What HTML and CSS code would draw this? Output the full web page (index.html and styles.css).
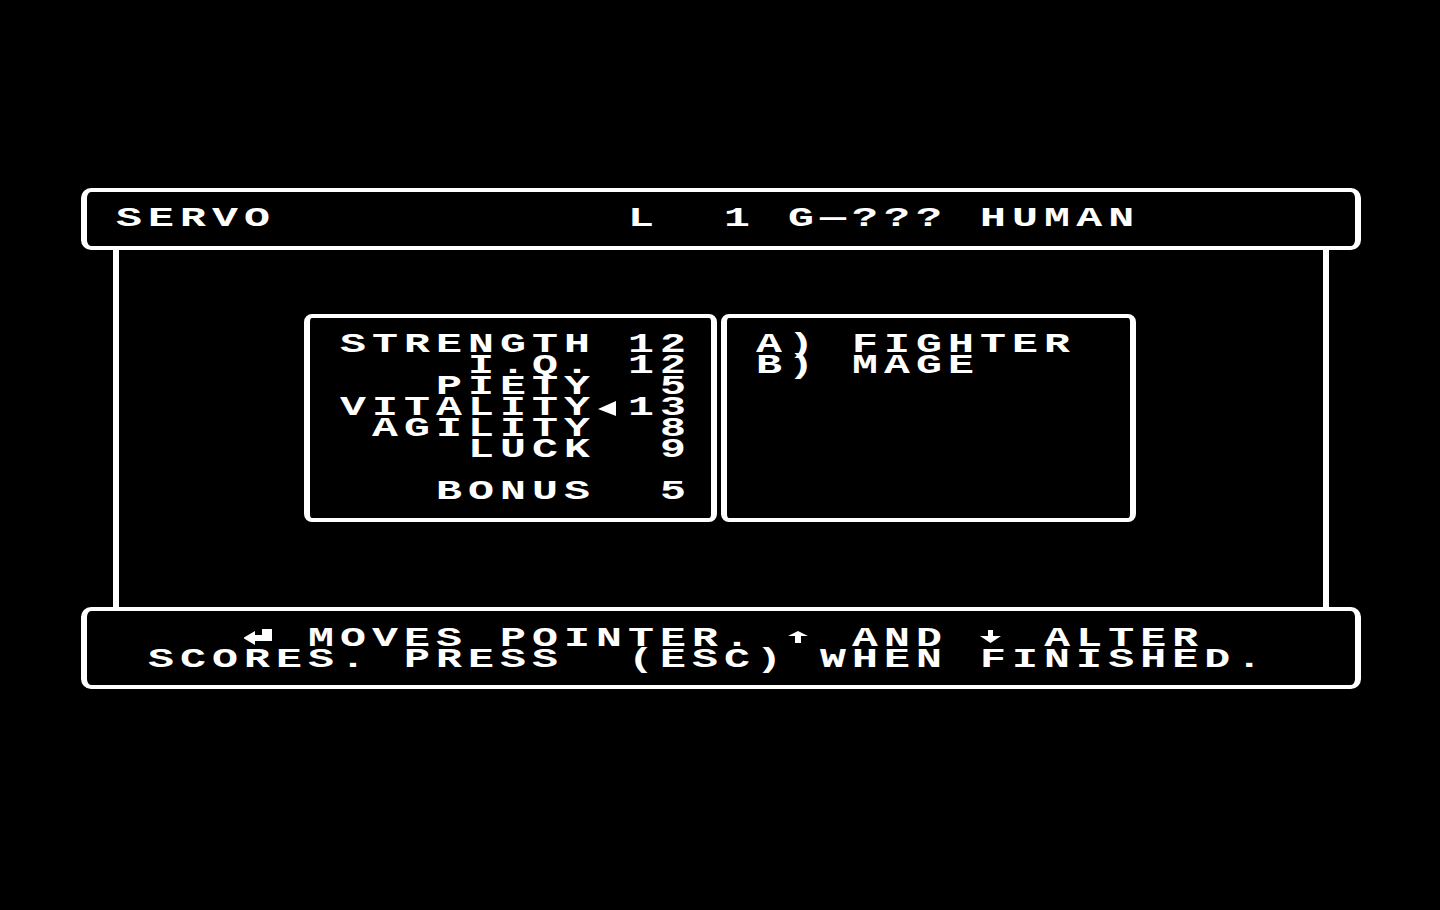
FILE: index.html
```html
<!DOCTYPE html>
<html>
<head>
<meta charset="utf-8">
<title>SERVO - 能力値</title>
<link rel="stylesheet" href="styles.css">
</head>

<body>
    <div class="screen">
        <!-- 名前・レベル・種族 -->
        <div class="bar title-bar">
            <pre class="text">SERVO           L  1 G—??? HUMAN</pre>
        </div>

        <div class="frame">
            <!-- 能力値 -->
            <div class="panel stats">
<pre class="text">STRENGTH 12
    I.Q. 12
   PIETY  5
VITALITY<svg class="glyph" viewBox="0 0 32 21" preserveAspectRatio="none"><polygon points="2,11 20,3 20,18"/></svg>13
 AGILITY  8
    LUCK  9

   BONUS  5</pre>
            </div>
            <!-- 職業 -->
            <div class="panel classes">
<pre class="text">A) FIGHTER
B) MAGE</pre>
            </div>
        </div>

        <!-- 操作説明 -->
        <div class="bar help-bar">
<pre class="text">   <svg class="glyph" viewBox="0 0 32 21" preserveAspectRatio="none"><polygon points="-1,9 11,2 11,6 18,6 18,0 28,0 28,12 11,12 11,16"/></svg> MOVES POINTER. <svg class="glyph" viewBox="0 0 32 21" preserveAspectRatio="none"><polygon points="10,2 20,7 13,7 13,14 7,14 7,7 0,7"/></svg> AND <svg class="glyph" viewBox="0 0 32 21" preserveAspectRatio="none"><polygon points="8,1 13,1 13,7 21,7 10.5,14 0,7 8,7"/></svg> ALTER
SCORES. PRESS  (ESC) WHEN FINISHED.</pre>
        </div>
    </div>
</body>

</html>
```

FILE: styles.css
```css
* { margin: 0; padding: 0; box-sizing: border-box; }
body { background-color: #000; color: #fff; font-family: "Liberation Mono", "DejaVu Sans Mono", monospace; font-weight: bold; overflow: hidden; }

/* 40桁 x 32px のマス目に合わせる */
.screen { width: 1280px; margin: 188px 0 0 81px; }
.text { width: max-content; white-space: pre; font-family: inherit; font-size: 27px; line-height: 21px; letter-spacing: 3.8px; transform: scaleX(1.6); transform-origin: 0 0; }
.glyph { display: inline-block; width: 20px; height: 21px; vertical-align: top; }
.glyph polygon { fill: #fff; }

/* 枠 */
.bar { border: solid #fff; border-width: 4px 6px; border-radius: 10px; }
.title-bar { height: 62px; padding: 17px 0 0 29px; }
.help-bar { height: 82px; padding: 18px 0 0 61px; }

.frame { display: flex; align-items: flex-start; gap: 4px; height: 357px; margin: 0 32px; padding: 64px 0 0 185px; border: solid #fff; border-width: 0 6px; }
.panel { height: 208px; border: solid #fff; border-width: 4px 6px; border-radius: 8px; padding: 17px 0 0 30px; }
.stats { width: 413px; }
.classes { width: 415px; padding-left: 29px; }
```
